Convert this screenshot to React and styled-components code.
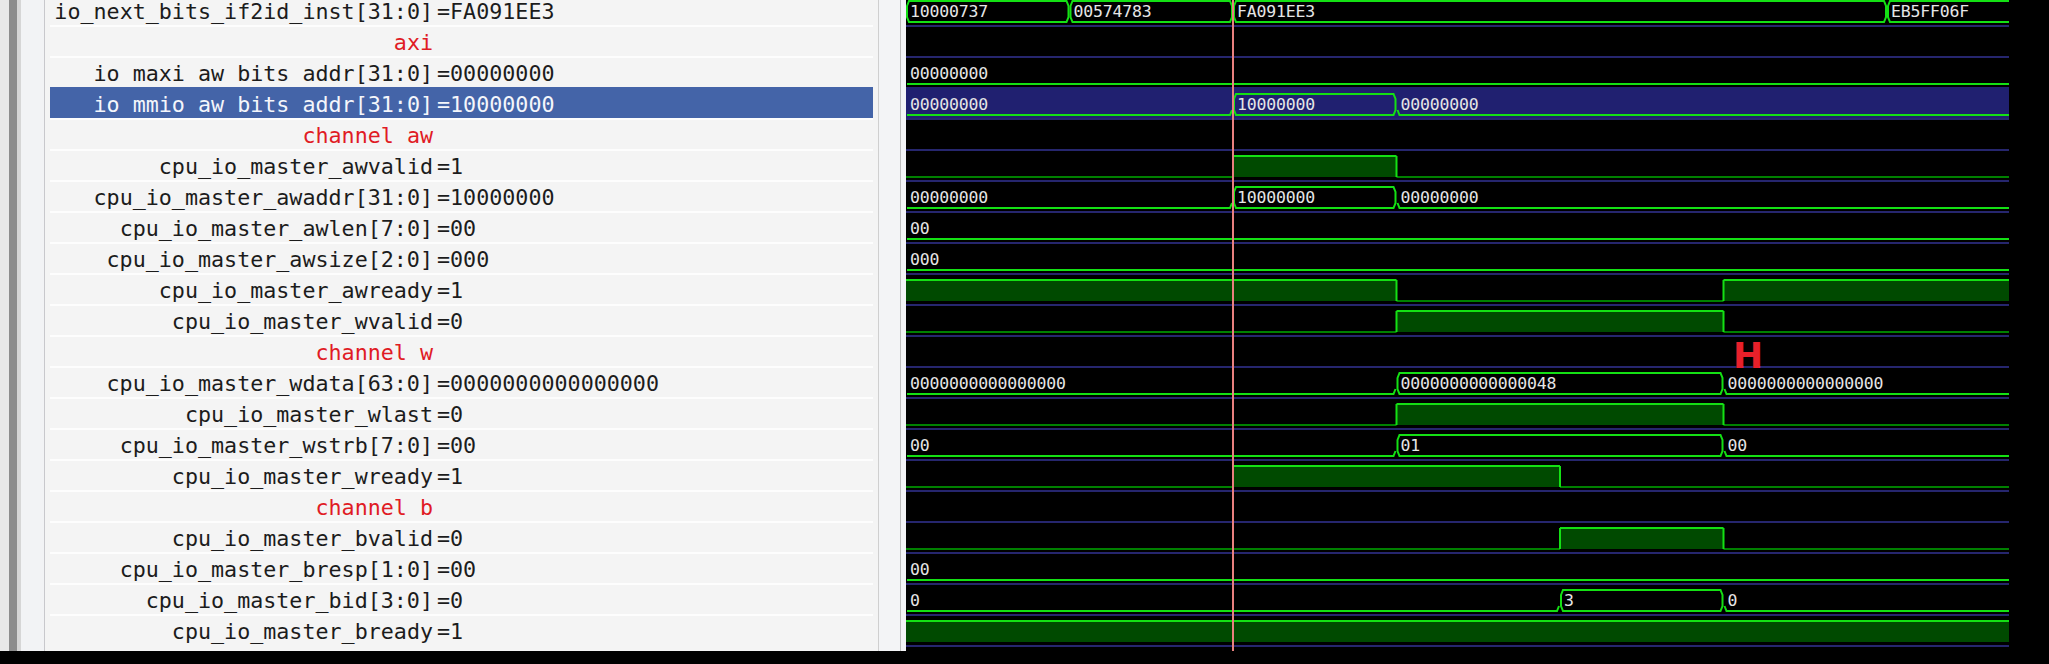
import React from 'react';
import styled, { createGlobalStyle } from 'styled-components';

const P = 163.5;
const WAVE_W = 1103;
const TOP = 5;
const BOT = 26;
const BRIGHT = '#14e014';
const LOWC = '#008000';
const FILL = '#004a00';

const GlobalStyle = createGlobalStyle`
  html, body { margin: 0; padding: 0; background: #000; }
  body { width: 2049px; height: 664px; overflow: hidden; }
`;

const Screen = styled.div`
  width: 2049px;
  height: 664px;
  background: #000;
  display: flex;
  flex-direction: column;
`;

const Workspace = styled.div`
  height: 651px;
  flex: none;
  display: flex;
  overflow: hidden;
`;

const BottomBand = styled.div`
  flex: 1;
  background: #000;
`;

const SidePanel = styled.div`
  width: 906px;
  flex: none;
  display: flex;
  background: #f3f4f6;
`;

const WindowEdge = styled.div`
  width: 9px;
  flex: none;
  background: #e8e8e8;
`;

const ScrollTrack = styled.div`
  width: 12px;
  flex: none;
  box-sizing: border-box;
  background: #8d8d8d;
  border-right: 4px solid #d6d6d6;
`;

const TreeGutter = styled.div`
  width: 24px;
  flex: none;
  box-sizing: border-box;
  background: #f2f3f5;
  border-right: 1px solid #c8c8cc;
`;

const SignalList = styled.div`
  width: 834px;
  flex: none;
  box-sizing: border-box;
  padding: 0 5px;
  background: #f4f4f4;
  border-right: 1px solid #cfcfcf;
  overflow: hidden;
`;

const SplitGap = styled.div`
  width: 22px;
  flex: none;
  box-sizing: border-box;
  background: #f3f4f6;
  border-right: 1px solid #bdbdbd;
`;

const WaveGap = styled.div`
  width: 5px;
  flex: none;
  background: #f3f4f6;
`;

const SignalRow = styled.div`
  height: 31px;
  box-sizing: border-box;
  border-top: 2px solid ${p => (p.$selected ? '#4464a8' : '#fdfdfd')};
  background: ${p => (p.$selected ? '#4464a8' : 'transparent')};
  color: ${p => (p.$selected ? '#f4f6fb' : '#1c1c1c')};
  display: grid;
  grid-template-columns: 383px 1fr;
  column-gap: 4px;
  padding-top: 4px;
  line-height: 24px;
  font-family: "DejaVu Sans Mono", monospace;
  font-size: 21.7px;
  white-space: pre;
  overflow: hidden;
  &:first-child { margin-top: -6px; }
`;

const SignalName = styled.span`
  text-align: right;
  color: ${p => (p.$group ? '#e01b24' : 'inherit')};
`;

const SignalValue = styled.span``;

const WavePanel = styled.div`
  width: ${WAVE_W}px;
  flex: none;
  position: relative;
  background: #000;
  overflow: hidden;
`;

const WaveRow = styled.div`
  height: 31px;
  box-sizing: border-box;
  border-top: 2px solid ${p => (p.$selected ? '#202070' : '#26266e')};
  background: ${p => (p.$selected ? '#202070' : 'transparent')};
  &:first-child { margin-top: -6px; }
  svg { display: block; }
`;

const ValueText = styled.text`
  font-family: "DejaVu Sans Mono", monospace;
  font-size: 16.5px;
  letter-spacing: -0.2px;
  fill: #e6e6e6;
`;

const Cursor = styled.div`
  position: absolute;
  top: 0;
  bottom: 0;
  left: 326px;
  width: 2px;
  background: #e8807e;
`;

const MarkerLabel = styled.div`
  position: absolute;
  left: 827px;
  top: 338px;
  font-family: "DejaVu Sans", sans-serif;
  font-weight: bold;
  font-size: 36px;
  line-height: 36px;
  color: #e8202a;
`;

const RightFill = styled.div`
  flex: 1;
  background: #000;
`;

const B = (name, value, segs, selected) => ({ kind: 'bus', name, value, segs, selected });
const S = (name, value, segs) => ({ kind: 'bit', name, value, segs });
const G = name => ({ kind: 'group', name });

const rows = [
  B('io_next_bits_if2id_inst[31:0]', 'FA091EE3', [[0, 1, '10000737'], [1, 2, '00574783'], [2, 6, 'FA091EE3'], [6, 8, 'EB5FF06F']]),
  G('axi'),
  B('io maxi aw bits addr[31:0]', '00000000', [[0, 8, '00000000']]),
  B('io mmio aw bits addr[31:0]', '10000000', [[0, 2, '00000000'], [2, 3, '10000000'], [3, 8, '00000000']], true),
  G('channel aw'),
  S('cpu_io_master_awvalid', '1', [[0, 2, 0], [2, 3, 1], [3, 8, 0]]),
  B('cpu_io_master_awaddr[31:0]', '10000000', [[0, 2, '00000000'], [2, 3, '10000000'], [3, 8, '00000000']]),
  B('cpu_io_master_awlen[7:0]', '00', [[0, 8, '00']]),
  B('cpu_io_master_awsize[2:0]', '000', [[0, 8, '000']]),
  S('cpu_io_master_awready', '1', [[0, 3, 1], [3, 5, 0], [5, 8, 1]]),
  S('cpu_io_master_wvalid', '0', [[0, 3, 0], [3, 5, 1], [5, 8, 0]]),
  G('channel w'),
  B('cpu_io_master_wdata[63:0]', '0000000000000000', [[0, 3, '0000000000000000'], [3, 5, '0000000000000048'], [5, 8, '0000000000000000']]),
  S('cpu_io_master_wlast', '0', [[0, 3, 0], [3, 5, 1], [5, 8, 0]]),
  B('cpu_io_master_wstrb[7:0]', '00', [[0, 3, '00'], [3, 5, '01'], [5, 8, '00']]),
  S('cpu_io_master_wready', '1', [[0, 2, 0], [2, 4, 1], [4, 8, 0]]),
  G('channel b'),
  S('cpu_io_master_bvalid', '0', [[0, 4, 0], [4, 5, 1], [5, 8, 0]]),
  B('cpu_io_master_bresp[1:0]', '00', [[0, 8, '00']]),
  B('cpu_io_master_bid[3:0]', '0', [[0, 4, '0'], [4, 5, '3'], [5, 8, '0']]),
  S('cpu_io_master_bready', '1', [[0, 8, 1]]),
];

function BusTrace({ segs }) {
  return segs.map(([s, e, text], i) => {
    const x0 = s * P;
    const x1 = e * P;
    const zero = /^0+$/.test(text);
    const hasPrev = i > 0;
    const hasNext = i < segs.length - 1;
    let shape;
    if (zero) {
      const pts = [];
      if (hasPrev) pts.push(`${x0 + 1},${BOT - 5}`, `${x0 + 3},${BOT}`);
      else pts.push(`${x0 + 1},${BOT}`);
      if (hasNext) pts.push(`${x1 - 3},${BOT}`, `${x1 - 1},${BOT - 5}`);
      else pts.push(`${x1},${BOT}`);
      shape = <polyline points={pts.join(' ')} fill="none" stroke={BRIGHT} strokeWidth="2" />;
    } else {
      const a = x0 + 1;
      const b = x1 - 1;
      const pts = [
        `${a},${TOP + 5}`, `${a + 2},${TOP}`, `${b - 2},${TOP}`, `${b},${TOP + 5}`,
        `${b},${BOT - 5}`, `${b - 2},${BOT}`, `${a + 2},${BOT}`, `${a},${BOT - 5}`,
      ];
      shape = <polygon points={pts.join(' ')} fill="none" stroke={BRIGHT} strokeWidth="2" />;
    }
    return (
      <g key={i}>
        {shape}
        <ValueText x={x0 + 4} y={21}>{text}</ValueText>
      </g>
    );
  });
}

function BitTrace({ segs }) {
  const out = [];
  segs.forEach(([s, e, v], i) => {
    const x0 = s * P;
    const x1 = e * P;
    if (v) {
      out.push(<rect key={`f${i}`} x={x0} y={TOP} width={x1 - x0} height={BOT - TOP} fill={FILL} />);
      out.push(<line key={`t${i}`} x1={x0} y1={TOP} x2={x1} y2={TOP} stroke={BRIGHT} strokeWidth="2" />);
    } else {
      out.push(<line key={`l${i}`} x1={x0} y1={BOT} x2={x1} y2={BOT} stroke={LOWC} strokeWidth="2" />);
    }
    if (i > 0) {
      out.push(<line key={`e${i}`} x1={x0} y1={TOP} x2={x0} y2={BOT} stroke={BRIGHT} strokeWidth="2" />);
    }
  });
  return out;
}

function Trace({ row }) {
  if (row.kind === 'group') return null;
  return (
    <svg width={WAVE_W} height={29} viewBox={`0 0 ${WAVE_W} 29`}>
      {row.kind === 'bus' ? <BusTrace segs={row.segs} /> : <BitTrace segs={row.segs} />}
    </svg>
  );
}

export default function App() {
  return (
    <>
      <GlobalStyle />
      <Screen>
        <Workspace>
          <SidePanel>
            <WindowEdge />
            <ScrollTrack />
            <TreeGutter />
            <SignalList>
              {rows.map((r, i) => (
                <SignalRow key={i} $selected={r.selected}>
                  <SignalName $group={r.kind === 'group'}>{r.name}</SignalName>
                  <SignalValue>{r.kind === 'group' ? '' : `=${r.value}`}</SignalValue>
                </SignalRow>
              ))}
            </SignalList>
            <SplitGap />
            <WaveGap />
          </SidePanel>
          <WavePanel>
            {rows.map((r, i) => (
              <WaveRow key={i} $selected={r.selected}>
                <Trace row={r} />
              </WaveRow>
            ))}
            <WaveRow />
            <Cursor />
            <MarkerLabel>H</MarkerLabel>
          </WavePanel>
          <RightFill />
        </Workspace>
        <BottomBand />
      </Screen>
    </>
  );
}
